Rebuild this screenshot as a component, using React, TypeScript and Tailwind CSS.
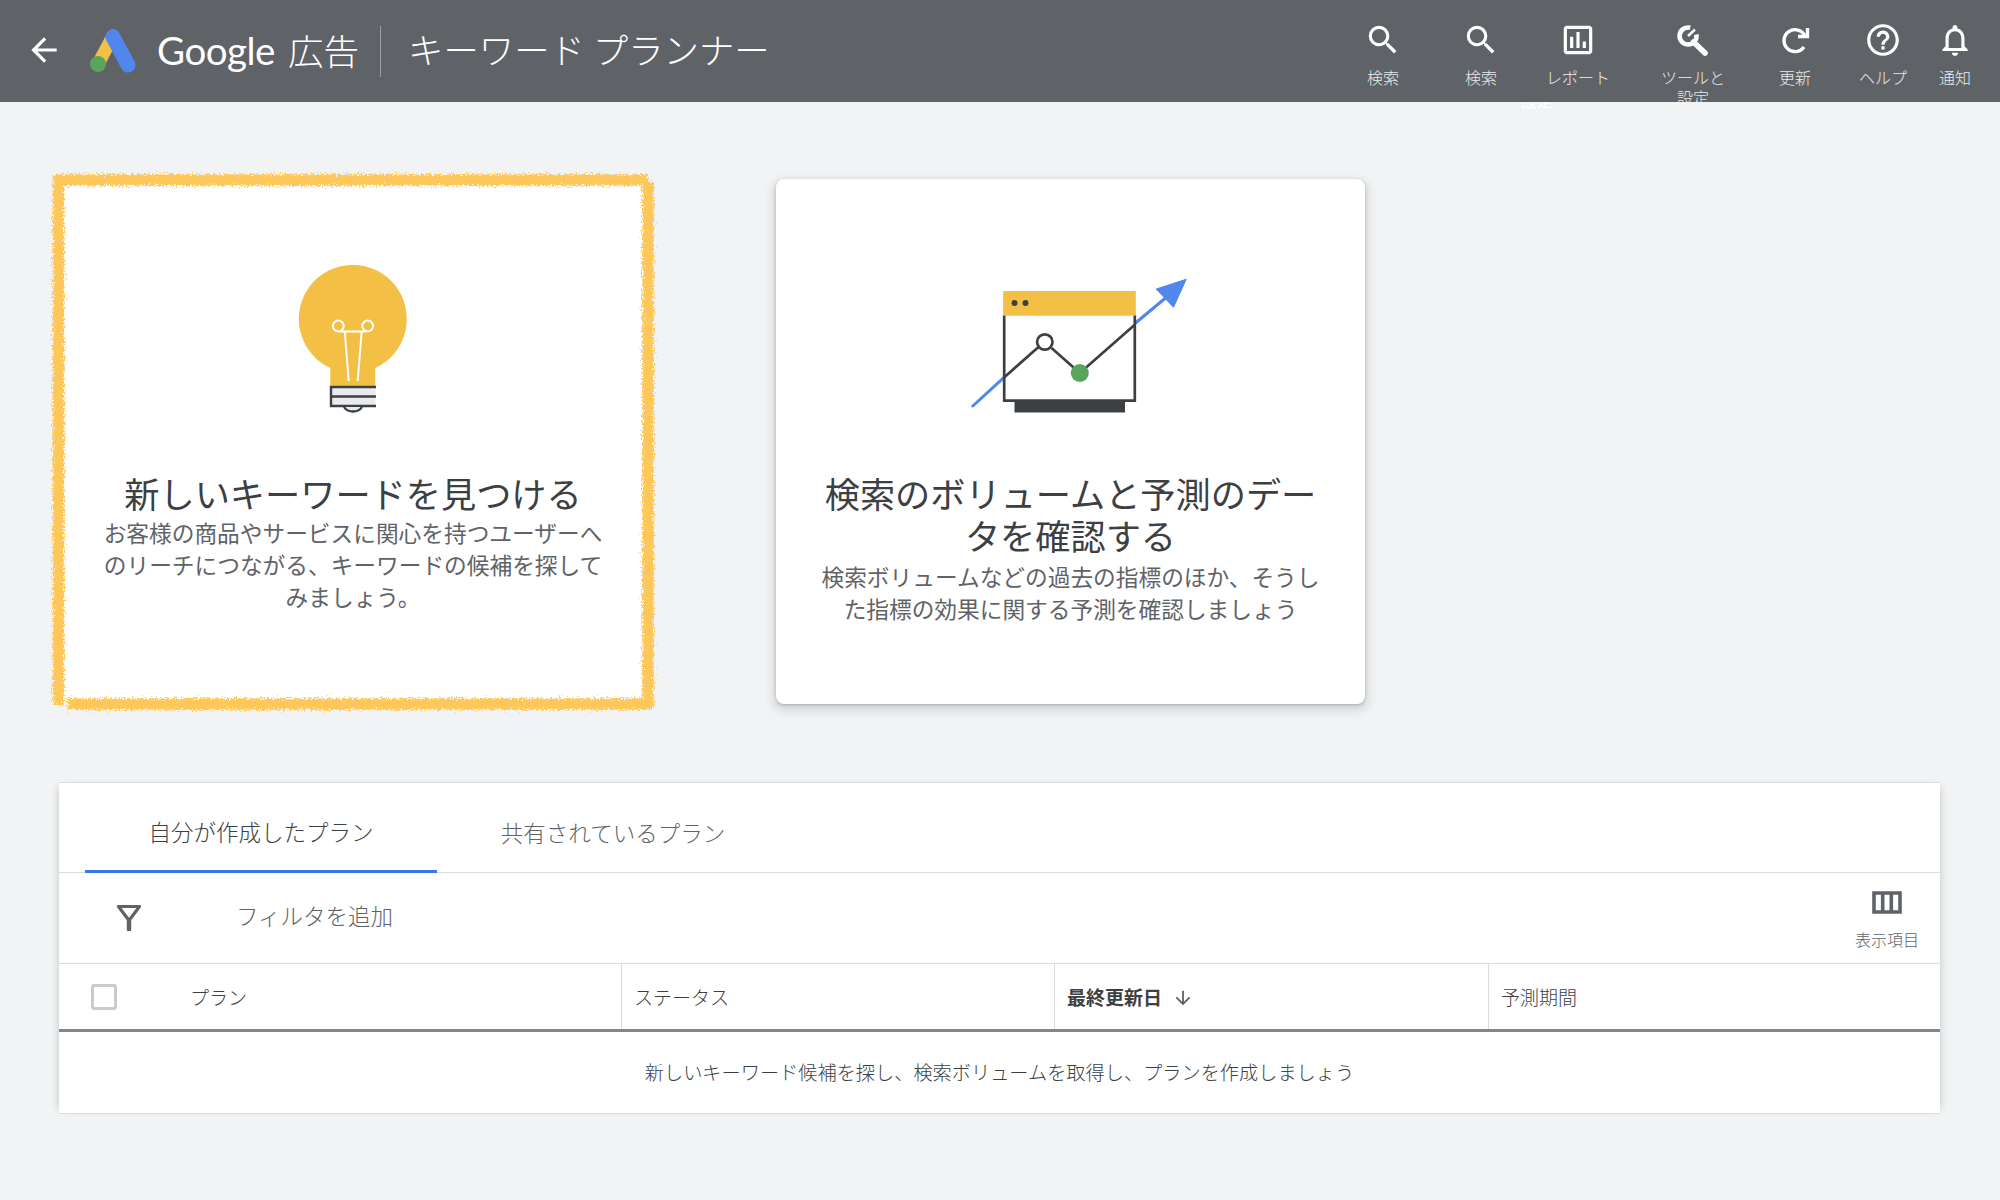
import type { ReactNode } from "react";
import {
  MdArrowBack,
  MdArrowDownward,
  MdHelpOutline,
  MdNotificationsNone,
  MdOutlineAssessment,
  MdSearch,
} from "react-icons/md";

function AdsLogo() {
  return (
    <svg width="50" height="44" viewBox="0 0 50 44" className="shrink-0">
      <line x1="9" y1="35" x2="24" y2="7" stroke="#f3bf45" strokeWidth="13" strokeLinecap="round" />
      <line x1="24" y1="8" x2="39" y2="36" stroke="#5186ec" strokeWidth="15" strokeLinecap="round" />
      <circle cx="9" cy="35" r="8" fill="#5aa55c" />
    </svg>
  );
}

function WrenchIcon() {
  return (
    <svg width="40" height="38" viewBox="0 0 40 38" fill="none" stroke="currentColor">
      <path d="M17.2 6.8 A8.5 8.5 0 1 0 23.4 13.5" strokeWidth="4.6" />
      <path d="M15 15 L22 8.5" strokeWidth="2.5" />
      <path d="M20.5 21 L32 32" strokeWidth="5.6" strokeLinecap="round" />
    </svg>
  );
}

function RefreshIcon() {
  return (
    <svg width="38" height="38" viewBox="0 0 38 38" fill="none" stroke="currentColor" strokeWidth="3.4">
      <path d="M29 15 A11 11 0 1 0 28 26" />
      <path d="M31.5 7 V15.5 H22" />
    </svg>
  );
}

function Bulb() {
  return (
    <svg width="120" height="150" viewBox="23 15 120 150">
      <path d="M60.3 118 A54 54 0 1 1 105.3 118 L105.3 137 L60.3 137 Z" fill="#f3bf45" />
      <rect x="60.5" y="136.5" width="45" height="20" fill="#e8eaed" />
      <path d="M106 137 H61 V156 H106 M61 146.5 H106" fill="none" stroke="#3c4043" strokeWidth="2.4" />
      <path d="M74 157 A10 8 0 0 0 92 157" fill="#e8eaed" stroke="#3c4043" strokeWidth="2.4" />
      <g fill="none" stroke="#fff" strokeWidth="2">
        <circle cx="68.3" cy="76" r="5.4" />
        <circle cx="97.7" cy="76" r="5.4" />
        <path d="M70 81.5 H96" />
        <path d="M74.7 81 L78.7 131 M91.7 81 L87.7 131" />
      </g>
    </svg>
  );
}

function TrendChart() {
  return (
    <svg width="240" height="150" viewBox="30.5 20 240 150">
      <path d="M52.3 156 L83.3 127.7 M215 73 L245 48" fill="none" stroke="#5186ec" strokeWidth="3" strokeLinecap="round" />
      <path d="M265.7 29.3 L235.7 39 L253 57.3 Z" fill="#5186ec" stroke="#5186ec" strokeWidth="1" strokeLinejoin="round" />
      <path d="M83.7 65 V150.7 H214.3 V65" fill="none" stroke="#3c4043" strokeWidth="2.7" />
      <rect x="94" y="151" width="110.5" height="11.5" fill="#3c4043" />
      <rect x="82.7" y="41" width="132.6" height="24.7" fill="#f3bf45" />
      <circle cx="94" cy="53" r="3" fill="#3c4043" />
      <circle cx="105" cy="53" r="3" fill="#3c4043" />
      <path d="M83.3 127.7 L118 97 M131 98 L159.3 123 L214 75" fill="none" stroke="#3c4043" strokeWidth="2.7" />
      <circle cx="124.3" cy="92" r="7.7" fill="#fff" stroke="#3c4043" strokeWidth="2.7" />
      <circle cx="159.3" cy="123" r="9" fill="#5aa55c" />
    </svg>
  );
}

function RoughFrame() {
  return (
    <svg
      className="absolute -left-[12px] -top-[12px] pointer-events-none"
      width="614"
      height="549"
      viewBox="0 0 614 549"
    >
      <filter id="rough" x="-5%" y="-5%" width="110%" height="110%" colorInterpolationFilters="sRGB">
        <feTurbulence type="fractalNoise" baseFrequency="0.6" numOctaves="3" seed="4" />
        <feDisplacementMap in="SourceGraphic" scale="9" xChannelSelector="R" yChannelSelector="G" />
      </filter>
      <g filter="url(#rough)" fill="none" stroke="#fdc75a" strokeWidth="11.5">
        <path d="M8 13 H602" />
        <path d="M602 15 V540" />
        <path d="M12.5 8 V538" />
        <path d="M22 537 H606" />
      </g>
    </svg>
  );
}

function ColumnsIcon() {
  return (
    <svg width="30" height="23" viewBox="0 0 30 23">
      <path d="M2 2 H28 V21 H2 Z M10.7 2 V21 M19.3 2 V21" fill="none" stroke="#5f6368" strokeWidth="3.6" />
    </svg>
  );
}

function FilterIcon() {
  return (
    <svg width="26" height="26" viewBox="0 0 26 26">
      <path d="M2.5 1.5 H23.5 L13 15.5 Z" fill="none" stroke="#5f6368" strokeWidth="3.2" strokeLinejoin="round" />
      <path d="M13 15 V24.5" fill="none" stroke="#5f6368" strokeWidth="4.4" strokeLinecap="round" />
    </svg>
  );
}

function ToolItem({ icon, label, width }: { icon: ReactNode; label: ReactNode; width: string }) {
  return (
    <div className={`flex flex-col items-center shrink-0 ${width}`}>
      <div className="h-[38px] mt-[21px] text-white">{icon}</div>
      <div className="mt-[8px] text-[16px] leading-[20px] text-center text-[#e8eaed] font-light">{label}</div>
    </div>
  );
}

function Header() {
  return (
    <header className="h-[102px] bg-[#5f6368] flex items-start overflow-hidden text-white">
      <MdArrowBack size={38} className="ml-[25px] mt-[31px] shrink-0" />
      <div className="ml-[26px] mt-[29px]">
        <AdsLogo />
      </div>
      <div className="ml-[18px] mt-[24px] text-[38.5px] leading-[52px] font-['Lato',sans-serif] w-[131px] tracking-[-0.5px]">Google</div>
      <div className="mt-[24px] text-[35.5px] leading-[52px] font-light w-[92px]">広告</div>
      <div className="w-px h-[51px] mt-[26px] bg-[#9aa0a6]" />
      <div className="ml-[27px] mt-[23px] text-[35.4px] leading-[52px] font-light whitespace-nowrap">キーワード プランナー</div>
      <div className="ml-auto mr-[26px] flex">
        <ToolItem width="w-[98px]" icon={<MdSearch size={38} />} label="検索" />
        <ToolItem width="w-[98px]" icon={<MdSearch size={38} />} label="検索" />
        <ToolItem width="w-[96px]" icon={<MdOutlineAssessment size={38} />} label="レポート" />
        <ToolItem
          width="w-[134px]"
          icon={<WrenchIcon />}
          label={
            <>
              ツールと
              <br />
              設定
            </>
          }
        />
        <ToolItem width="w-[70px]" icon={<RefreshIcon />} label="更新" />
        <ToolItem width="w-[106px]" icon={<MdHelpOutline size={38} />} label="ヘルプ" />
        <ToolItem width="w-[38px]" icon={<MdNotificationsNone size={38} />} label="通知" />
      </div>
    </header>
  );
}

function ActionCard({
  illustration,
  title,
  body,
  highlighted,
  paddingTop,
  bodyGap,
  width,
}: {
  illustration: ReactNode;
  title: string;
  body: string;
  highlighted?: boolean;
  paddingTop: string;
  bodyGap: string;
  width: string;
}) {
  return (
    <div
      className={`relative h-[525px] bg-white rounded-[8px] px-[40px] text-center ${width} ${
        highlighted ? "" : "shadow-[0_1px_3px_rgba(60,64,67,0.3),0_4px_8px_3px_rgba(60,64,67,0.15)]"
      }`}
    >
      <div className={`h-[293px] flex justify-center ${paddingTop}`}>{illustration}</div>
      <h2 className="text-[35.2px] leading-[42px] text-[#3c4043]">{title}</h2>
      <p className={`text-[22.7px] leading-[32px] text-[#5f6368] ${bodyGap}`}>{body}</p>
      {highlighted && <RoughFrame />}
    </div>
  );
}

function PlansTable() {
  return (
    <section className="mt-[78px] ml-[59px] w-[1881px] bg-white border-t border-b border-[#dadce0] shadow-[-6px_0_8px_-6px_rgba(60,64,67,0.25),6px_0_8px_-6px_rgba(60,64,67,0.25)]">
      <div className="h-[90px] border-b border-[#dadce0] flex pl-[26px] items-stretch text-[22.5px]">
        <div className="w-[352px] flex items-center justify-center border-b-[3px] border-[#3b78e7] -mb-px font-light text-[#3c4043]">
          <span className="mt-[10px]">自分が作成したプラン</span>
        </div>
        <div className="w-[352px] flex items-center justify-center font-light text-[#5f6368]">
          <span className="mt-[10px]">共有されているプラン</span>
        </div>
      </div>
      <div className="h-[91px] border-b border-[#dadce0] flex items-center">
        <div className="ml-[57px]">
          <FilterIcon />
        </div>
        <span className="ml-[94px] -mt-[5px] text-[22.5px] font-light text-[#5f6368]">フィルタを追加</span>
        <div className="ml-auto mr-[21px] flex flex-col items-center gap-[15px] pt-[3px]">
          <ColumnsIcon />
          <span className="text-[16px] leading-[20px] font-light text-[#5f6368]">表示項目</span>
        </div>
      </div>
      <div className="h-[68px] border-b-[3px] border-[#80868b] grid grid-cols-[562px_433px_434px_1fr] text-[19px] font-light text-[#3c4043]">
        <div className="flex items-center">
          <span className="ml-[32px] w-[26px] h-[26px] border-[3px] border-[#c9cbce] rounded-[3px]" />
          <span className="ml-[73px] mt-[2px]">プラン</span>
        </div>
        <div className="flex items-center pl-[12px] pt-[2px] border-l border-[#dadce0]">ステータス</div>
        <div className="flex items-center pl-[12px] pt-[2px] border-l border-[#dadce0] font-bold">
          最終更新日
          <MdArrowDownward size={22} className="ml-[10px] text-[#5f6368]" />
        </div>
        <div className="flex items-center pl-[12px] pt-[2px] border-l border-[#dadce0]">予測期間</div>
      </div>
      <div className="h-[81px] flex items-center justify-center text-[19.2px] font-light text-[#3c4043]">
        新しいキーワード候補を探し、検索ボリュームを取得し、プランを作成しましょう
      </div>
    </section>
  );
}

export default function App() {
  return (
    <div className="relative min-h-[1200px] bg-[#f1f3f4] font-['Noto_Sans_CJK_JP','Liberation_Sans',sans-serif]">
      <Header />
      <div className="absolute left-[1521px] top-[102px] h-[9px] overflow-hidden text-[16px] leading-[20px] text-white">
        <div className="-mt-[12px]">設定</div>
      </div>
      <main>
        <div className="pt-[77px] pl-[58px] flex gap-[128px]">
          <ActionCard
            highlighted
            width="w-[590px]"
            paddingTop="pt-[86px]"
            bodyGap="mt-[3px]"
            illustration={<Bulb />}
            title="新しいキーワードを見つける"
            body="お客様の商品やサービスに関心を持つユーザーへのリーチにつながる、キーワードの候補を探してみましょう。"
          />
          <ActionCard
            width="w-[589px]"
            paddingTop="pt-[91px]"
            bodyGap="mt-[5px]"
            illustration={<TrendChart />}
            title="検索のボリュームと予測のデータを確認する"
            body="検索ボリュームなどの過去の指標のほか、そうした指標の効果に関する予測を確認しましょう"
          />
        </div>
        <PlansTable />
      </main>
    </div>
  );
}
